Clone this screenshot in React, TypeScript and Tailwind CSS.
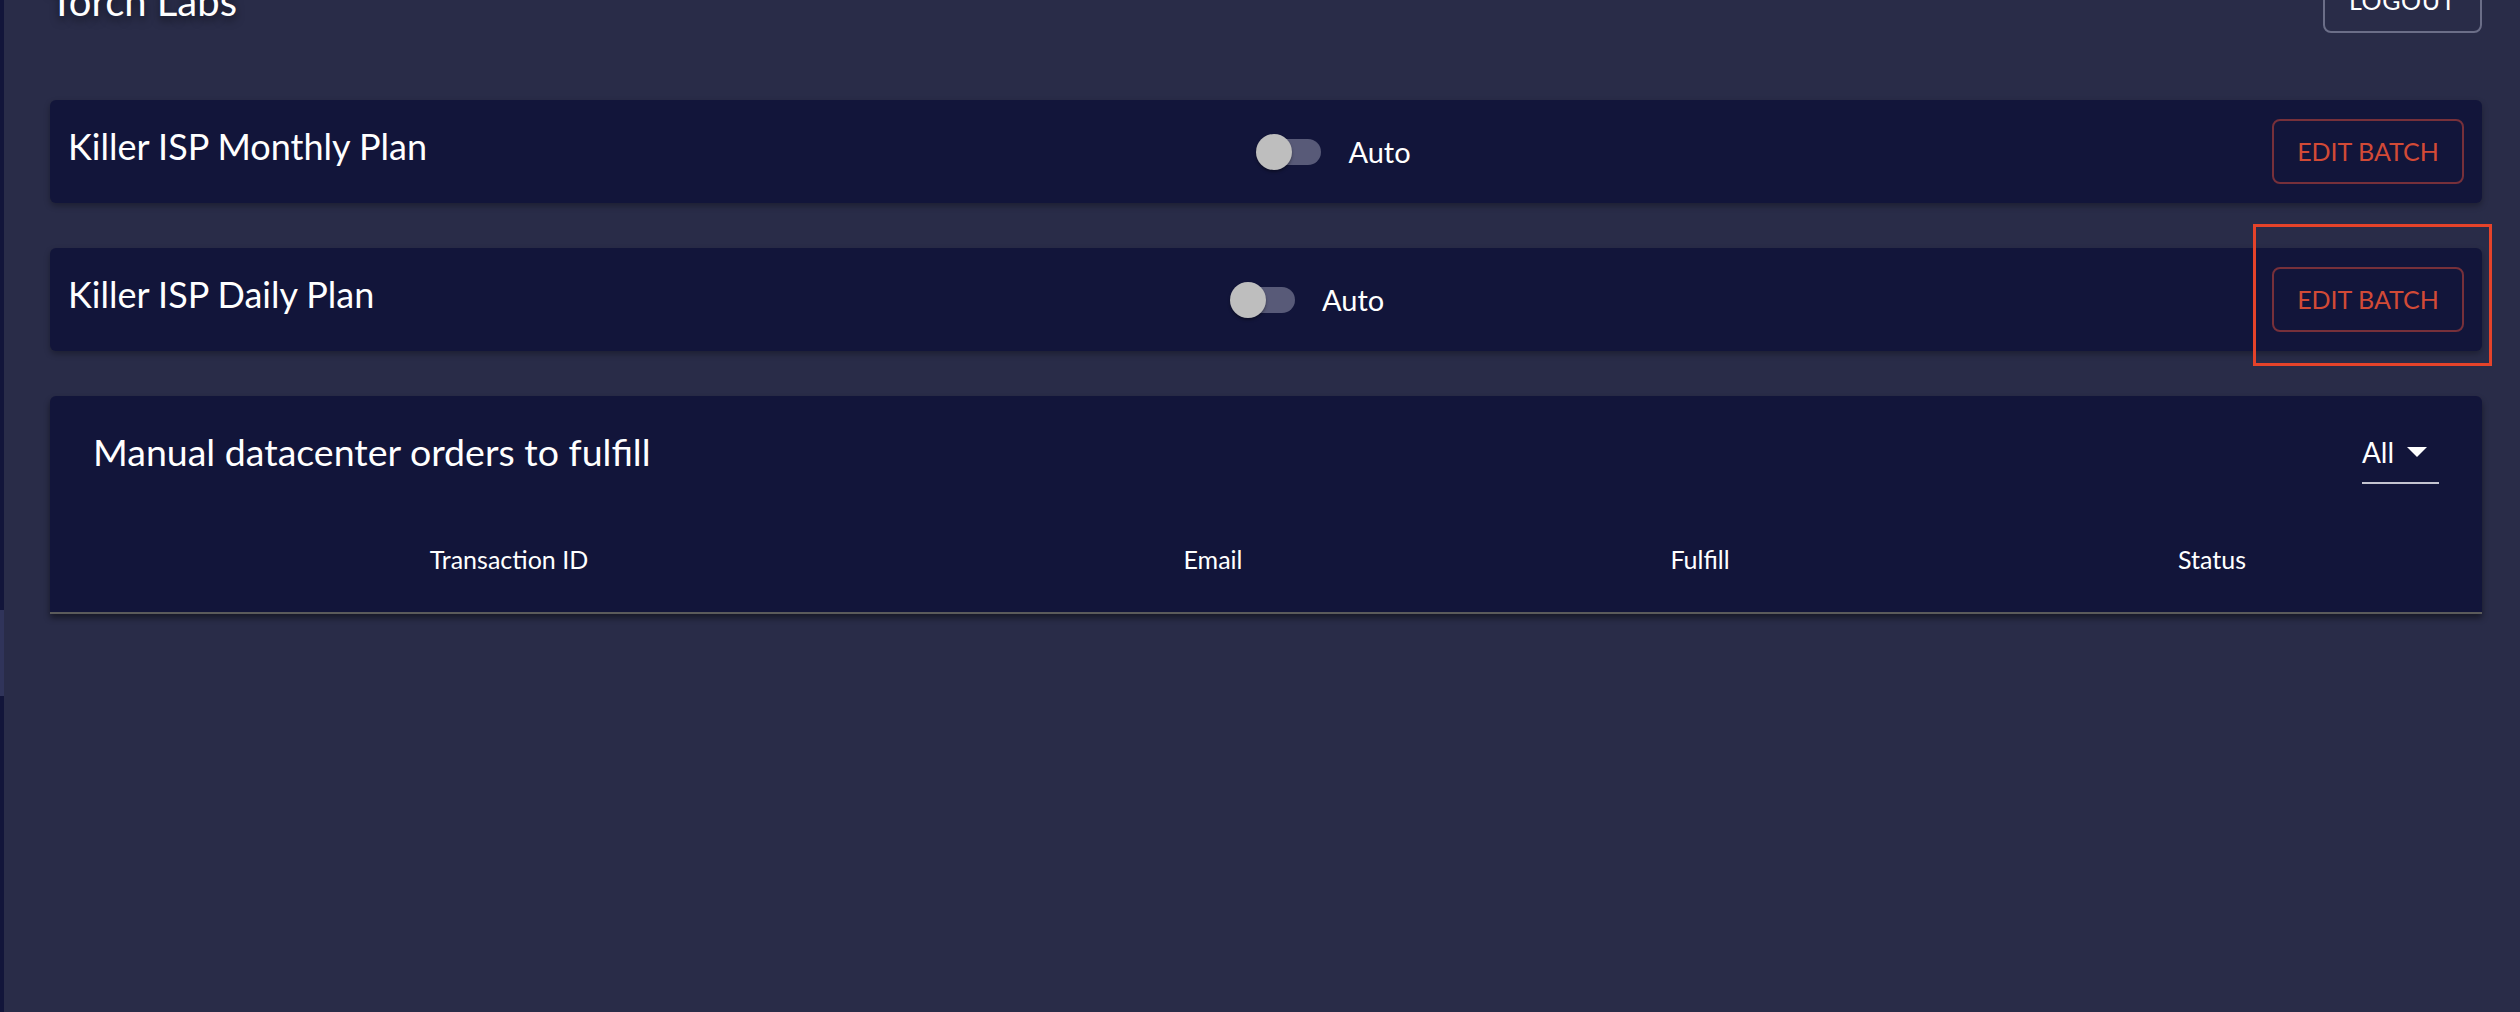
const plans = [
  { id: 1, name: "Killer ISP Monthly Plan" },
  { id: 2, name: "Killer ISP Daily Plan" },
]

const columns = ["Transaction ID", "Email", "Fulfill", "Status"]

function Toggle() {
  return (
    <div className="relative w-[67px] h-[36px] shrink-0">
      <div className="absolute left-[2px] right-[2px] top-[5px] h-[26px] rounded-full bg-[#585a78]" />
      <div className="absolute left-0 top-0 w-[36px] h-[36px] rounded-full bg-[#bebebe] shadow-[0_2px_3px_rgba(0,0,0,0.35)]" />
    </div>
  )
}

function PlanCard({ name }: { name: string }) {
  return (
    <div className="flex items-center justify-between h-[103px] px-[18px] rounded-[6px] bg-[#12153a] shadow-[0_3px_6px_rgba(0,0,0,0.3)]">
      <h3 className="text-[36px] leading-tight text-white mb-[10px]">{name}</h3>
      <div className="flex items-center gap-[25px] pr-[32px]">
        <Toggle />
        <span className="text-[29px] text-white">Auto</span>
      </div>
      <button className="h-[65px] w-[192px] rounded-[8px] border-2 border-[#77303a] text-[25px] text-[#d24a36]">
        EDIT BATCH
      </button>
    </div>
  )
}

export default function App() {
  return (
    <div
      className="flex min-h-screen h-[1012px] overflow-hidden bg-[#292c48]"
      style={{ fontFamily: "Lato, 'Open Sans', sans-serif" }}
    >
      {/* sidebar edge */}
      <div className="flex flex-col w-[4px] shrink-0 bg-[#12153a]">
        <div className="h-[610px]" />
        <div className="h-[86px] bg-[#30345a]" />
      </div>

      <main className="relative flex-1 pl-[46px] pr-[38px]">
        {/* header */}
        <div className="flex items-center justify-between h-[65px] -mt-[32px]">
          <h1 className="text-[40px] text-white [text-shadow:0_4px_8px_rgba(0,0,0,0.55)]">
            Torch Labs
          </h1>
          <button className="h-[65px] w-[159px] rounded-[8px] border-2 border-[#6b6e88] text-[25px] tracking-wide text-white">
            LOGOUT
          </button>
        </div>

        <div className="flex flex-col gap-[45px] mt-[67px]">
          {plans.map((plan) => (
            <PlanCard key={plan.id} name={plan.name} />
          ))}

          {/* manual orders */}
          <div className="rounded-t-[6px] bg-[#12153a] border-b-2 border-[#5b5b5b] shadow-[0_4px_6px_rgba(0,0,0,0.45)]">
            <div className="flex items-center justify-between h-[112px] px-[43px]">
              <h2 className="text-[37.5px] text-white">Manual datacenter orders to fulfill</h2>
              <div className="flex items-center gap-[13px] pr-[12px] pb-[9px] mt-[10px] border-b-2 border-[#c4c4d0]">
                <span className="text-[28px] text-white">All</span>
                <svg width="20" height="10" viewBox="0 0 20 10">
                  <path d="M0 0 L20 0 L10 10 Z" fill="#ffffff" />
                </svg>
              </div>
            </div>
            <div className="grid grid-cols-[918px_490px_484px_1fr] h-[104px] items-center text-center">
              {columns.map((col) => (
                <div key={col} className="text-[25px] text-white">
                  {col}
                </div>
              ))}
            </div>
          </div>
        </div>

        {/* review highlight */}
        <div className="absolute left-[2249px] top-[224px] w-[239px] h-[142px] border-[3px] border-[#e5432a] pointer-events-none" />
      </main>
    </div>
  )
}
